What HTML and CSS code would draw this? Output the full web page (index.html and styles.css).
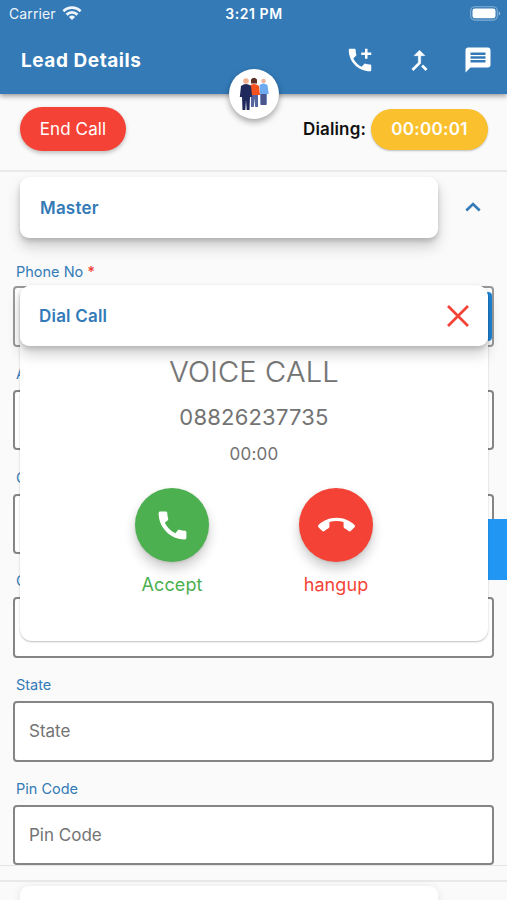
FILE: index.html
```html
<!DOCTYPE html>
<html lang="en">
<head>
<meta charset="utf-8">
<title>Lead Details</title>
<link rel="stylesheet" href="styles.css">
</head>
<body>
<div class="screen">
  <header class="header">
    <div class="status">
      <div class="carrier"><span>Carrier</span>
        <svg width="20" height="15" viewBox="0 0 20 15" fill="none" stroke="#fff" stroke-width="2.8"><path d="M1.4 5.2a12.2 12.2 0 0 1 17.2 0M4.6 8.7a7.6 7.6 0 0 1 10.8 0"/><path d="M10 14l-3.1-3.1a4.4 4.4 0 0 1 6.2 0z" fill="#fff" stroke="none"/></svg>
      </div>
      <span class="time">3:21 PM</span>
      <svg class="battery" width="31" height="15" viewBox="0 0 31 15"><rect x=".7" y=".7" width="26.6" height="13.4" rx="4" fill="none" stroke="#fff" stroke-opacity=".4" stroke-width="1.1"/><rect x="2.5" y="2.5" width="23" height="9.8" rx="2.2" fill="#fff"/><path d="M28.7 5.2c2 .8 2 3.6 0 4.4z" fill="#fff" opacity=".5"/></svg>
    </div>
    <div class="toolbar">
      <h1>Lead Details</h1>
      <div class="actions">
        <svg width="30" height="30" viewBox="0 0 24 24" fill="#fff"><path d="M20 15.5c-1.25 0-2.45-.2-3.57-.57-.35-.11-.74-.03-1.02.24l-2.2 2.2c-2.83-1.44-5.15-3.75-6.59-6.59l2.2-2.21c.28-.26.36-.65.25-1C8.7 6.45 8.5 5.25 8.5 4c0-.55-.45-1-1-1H4c-.55 0-1 .45-1 1 0 9.39 7.61 17 17 17 .55 0 1-.45 1-1v-3.5c0-.55-.45-1-1-1zM21 6h-3V3h-2v3h-3v2h3v3h2V8h3z"/></svg>
        <svg class="merge" width="29" height="29" viewBox="0 0 24 24" fill="#fff" stroke="#fff" stroke-width=".4"><path d="M17 20.41 18.41 19 15 15.59 13.59 17 17 20.41zM7.5 8H11v5.59L5.59 19 7 20.41l6-6V8h3.5L12 3.500 7.500 8z"/></svg>
        <svg width="30" height="30" viewBox="0 0 24 24" fill="#fff"><path fill-rule="evenodd" d="M20 2H4c-1.100 0-1.990.9-1.990 2L2 22l4-4h14c1.100 0 2-.9 2-2V4c0-1.100-.9-2-2-2zM6 6h12v2H6zM6 9h12v2H6zM6 12h12v2H6z"/></svg>
      </div>
    </div>
    <div class="avatar">
      <svg width="30" height="34" viewBox="0 0 30 34">
        <circle cx="24.500" cy="4" r="2.300" fill="#edb49d"/><path d="M20.500 8q4-3 8 0l1.200 9h-2v10h-6z" fill="#6eaaf0"/><path d="M21.500 17h6v11h-6z" fill="#4c568c"/>
        <path d="M12 2.500q3-3.500 6 0v4h-6z" fill="#5b3028"/><path d="M10 9q5-4 10 0l1 9h-2.500v1h-7z" fill="#f5511e"/><path d="M12 18h7v12h-2.800l-.7-9-.7 9H12z" fill="#53649f"/>
        <circle cx="7" cy="4" r="2.800" fill="#f1b18e"/><path d="M2 9q5-4 10 0l1.200 11h-2.200l-.5 13H7.700L7 23l-.7 10H3.500L3 20H.8z" fill="#20295b"/>
      </svg>
    </div>
  </header>

  <section class="callbar">
    <button class="end">End Call</button>
    <div class="dialing"><span class="dialing-label">Dialing:</span><span class="timer">00:00:01</span></div>
  </section>

  <main>
    <div class="section-head">
      <div class="section-card"><span>Master</span></div>
      <svg class="chevron" width="18" height="12" viewBox="0 0 18 12" fill="none" stroke="#337ab7" stroke-width="2.600"><path d="M2.300 9.500 9 3l6.700 6.500"/></svg>
    </div>
    <form class="fields">
      <div class="field"><label class="first">Phone No <b>*</b></label><div class="input phone"><i></i></div></div>
      <div class="field"><label>Address</label><div class="input"></div></div>
      <div class="field"><label>Country</label><div class="input"></div></div>
      <div class="field"><label>City</label><div class="input"></div></div>
      <div class="field"><label>State</label><div class="input"><span class="state">State</span></div></div>
      <div class="field"><label>Pin Code</label><div class="input"><span class="pin">Pin Code</span></div></div>
    </form>
    <div class="next"><div class="next-card"></div></div>
  </main>

  <div class="side-tab"></div>

  <div class="dialog">
    <div class="dialog-head"><span>Dial Call</span>
      <svg width="24" height="24" viewBox="0 0 24 24" stroke="#f44336" stroke-width="2.700"><path d="M2 2l20 20M22 2 2 22"/></svg>
    </div>
    <div class="voice"><span>VOICE CALL</span></div>
    <div class="number"><span>08826237735</span></div>
    <div class="elapsed"><span>00:00</span></div>
    <div class="choices">
      <div class="choice accept">
        <div class="round"><svg width="37" height="37" viewBox="0 0 24 24" fill="#fff"><path d="M20.010 15.380c-1.230 0-2.420-.2-3.530-.56-.35-.12-.74-.03-1.010.24l-1.570 1.970c-2.830-1.350-5.480-3.900-6.890-6.830l1.950-1.660c.27-.28.35-.67.240-1.020-.37-1.110-.56-2.300-.56-3.530 0-.54-.45-.99-.99-.99H4.190C3.650 3 3 3.240 3 3.990 3 13.280 10.730 21 20.010 21c.71 0 .99-.63.990-1.180v-3.450c0-.54-.45-.99-.99-.99z"/></svg></div>
        <span>Accept</span>
      </div>
      <div class="choice hangup">
        <div class="round"><svg width="37" height="37" viewBox="0 0 24 24" fill="#fff"><path d="M12 9c-1.600 0-3.150.25-4.600.72v3.100c0 .39-.23.740-.56.900-.98.490-1.870 1.120-2.660 1.850-.18.180-.43.280-.7.280-.28 0-.53-.11-.71-.29L.290 13.080c-.18-.17-.29-.42-.29-.7 0-.28.110-.53.290-.71C3.340 8.780 7.460 7 12 7s8.660 1.780 11.710 4.670c.18.180.290.430.290.710 0 .28-.11.530-.29.710l-2.480 2.480c-.18.180-.43.290-.71.290-.27 0-.52-.11-.7-.28-.79-.74-1.690-1.360-2.670-1.850-.33-.16-.56-.5-.56-.9v-3.100C15.150 9.250 13.600 9 12 9z"/></svg></div>
        <span>hangup</span>
      </div>
    </div>
  </div>
</div>
</body>
</html>
```
FILE: styles.css
```css
* { box-sizing: border-box; }
body { margin: 0; font-family: Inter, "Liberation Sans", sans-serif; }
svg { display: block; flex: none; }
span, h1, label { white-space: nowrap; }
.screen { position: relative; width: 507px; height: 900px; overflow: hidden; background: #fafafa; }

.header { position: relative; z-index: 1; height: 94px; background: #337ab7; color: #fff; box-shadow: 0 2px 5px rgba(0,0,0,.4); }
.status { height: 27px; display: grid; grid-template-columns: 1fr auto 1fr; align-items: center; padding: 0 6px 0 9px; }
.carrier { display: flex; align-items: center; gap: 6px; font-size: 14px; letter-spacing: .1px; opacity: .93; }
.carrier svg { margin-top: -1px; }
.time { font-size: 14px; font-weight: 600; letter-spacing: .55px; margin-left: -2px; }
.battery { justify-self: end; }
.toolbar { height: 66px; display: flex; align-items: center; justify-content: space-between; padding: 0 14px 0 21px; }
h1 { margin: 0; font-size: 19px; font-weight: 700; letter-spacing: .55px; }
.actions { display: flex; align-items: center; margin-top: -1px; }
.merge { margin: 1px 29px 0 30px; }
.avatar { position: absolute; left: 229px; top: 69px; width: 50px; height: 50px; border-radius: 50%; background: #fff; display: flex; align-items: center; justify-content: center; box-shadow: 0 3px 6px rgba(0,0,0,.35); }

.callbar { height: 78px; border-bottom: 2px solid #e9e9e9; display: flex; align-items: center; justify-content: space-between; padding: 0 19px 6px 20px; }
.end { width: 106px; height: 44px; margin-top: -1px; padding: 0; border: 0; border-radius: 22px; background: #f44336; color: #fff; font: 400 17px Inter, sans-serif; letter-spacing: .1px; box-shadow: 0 2px 4px rgba(0,0,0,.25); }
.dialing { display: flex; align-items: center; gap: 5px; }
.dialing-label { font-size: 17px; font-weight: 600; letter-spacing: .15px; color: #111; }
.timer { width: 117px; height: 41px; border-radius: 21px; background: #fbc02d; color: #fff; font-size: 17px; font-weight: 600; letter-spacing: .3px; display: flex; align-items: center; justify-content: center; box-shadow: 0 1px 2px rgba(0,0,0,.25); }

.section-head { display: flex; align-items: center; padding: 5px 0 0 20px; gap: 26px; }
.section-card { width: 418px; height: 61px; border-radius: 9px; background: #fff; display: flex; align-items: center; padding: 0 0 0 20px; color: #337ab7; font-size: 17px; font-weight: 600; letter-spacing: .2px; box-shadow: 0 9px 14px rgba(0,0,0,.17), 0 3px 5px rgba(0,0,0,.16); }
.chevron { margin-top: -1px; }
.fields { position: relative; margin: 0; padding: 19px 13px 0; display: grid; grid-auto-rows: 103.8px; height: 628px; }
.field { display: flex; flex-direction: column; }
label { height: 29px; line-height: 26px; padding-left: 3px; font-size: 14.500px; color: #337ab7; }
label.first { line-height: 30px; }
label b { color: #f44336; font-weight: 600; }
.input { height: 60.500px; border: 2.500px solid #858585; border-radius: 4px; background: #fff; display: flex; align-items: center; padding: 0 0 1px 14px; color: #737373; font-size: 17px; }
.phone { border-color: #999; padding-bottom: 0; justify-content: flex-end; }
.phone i { width: 70px; height: 49px; border-radius: 4px; background: #1e88dc; }
.next { border-top: 1px solid #e4e4e4; height: 80px; }
.next::before { content: ""; display: block; height: 14px; border-bottom: 2px solid #e9e9e9; margin-bottom: 4px; }
.next { margin-top: -1px; }
.next-card { width: 418px; height: 61px; margin-left: 20px; border-radius: 9px; background: #fff; box-shadow: 0 2px 8px rgba(0,0,0,.1); }

.side-tab { position: absolute; right: 0; top: 519px; width: 60px; height: 61px; background: #2196f3; }
.dialog { position: absolute; left: 20px; top: 285px; width: 468px; height: 356px; border-radius: 12px; background: #fff; box-shadow: 0 1px 2px rgba(0,0,0,.25); color: #737373; text-align: center; }
.dialog-head { height: 61px; border-radius: 9px; display: flex; align-items: center; justify-content: space-between; padding: 0 18px 0 19px; color: #337ab7; font-size: 17px; font-weight: 600; letter-spacing: .2px; box-shadow: 0 9px 14px rgba(0,0,0,.17), 0 3px 5px rgba(0,0,0,.16); }
.voice { height: 50px; line-height: 51px; font-size: 29px; font-weight: 300; letter-spacing: .2px; -webkit-text-stroke: .2px #737373; }
.number { height: 42px; line-height: 42px; font-size: 22px; letter-spacing: .2px; }
.elapsed { height: 32px; line-height: 33px; font-size: 17px; letter-spacing: .2px; }
.choices { display: flex; justify-content: center; gap: 90px; padding-top: 18px; }
.choice { width: 74px; display: flex; flex-direction: column; align-items: center; font-size: 18px; letter-spacing: .1px; }
.round { width: 74px; height: 74px; border-radius: 50%; display: flex; align-items: center; justify-content: center; margin-bottom: 12px; box-shadow: 0 7px 12px rgba(0,0,0,.2), 0 1px 3px rgba(0,0,0,.1); }
.accept { color: #4caf50; }
.hangup { color: #f44336; }
.accept .round { background: #4caf50; }
.hangup .round { background: #f44336; }
```
